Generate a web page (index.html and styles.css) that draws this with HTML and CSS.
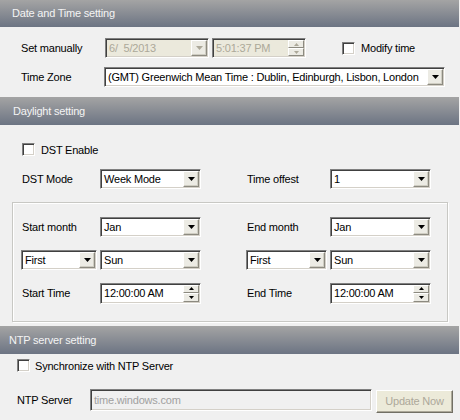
FILE: index.html
```html
<!DOCTYPE html>
<html>
<head>
<meta charset="utf-8">
<link rel="stylesheet" href="styles.css">
</head>
<body>
<div class="page">
  <div class="hdr">Date and Time setting</div>
  <div class="sec1">
    <div class="row">
      <span class="lbl l1">Set manually</span>
      <div class="field dis w-date">
        <span class="txt">6/&nbsp; 5/2013</span>
        <span class="drop"><svg width="7" height="4" viewBox="0 0 7 4"><polygon points="0,0 7,0 3.5,4" fill="#aca899"/></svg></span>
      </div>
      <div class="field dis w-time">
        <span class="txt">5:01:37 PM</span>
        <span class="spin">
          <span class="sb"><svg width="5" height="3" viewBox="0 0 5 3"><polygon points="2.5,0 5,3 0,3" fill="#aca899"/></svg></span>
          <span class="sb"><svg width="5" height="3" viewBox="0 0 5 3"><polygon points="0,0 5,0 2.5,3" fill="#aca899"/></svg></span>
        </span>
      </div>
      <label class="chk modify"><span class="box"></span><span>Modify time</span></label>
    </div>
    <div class="row">
      <span class="lbl l2">Time Zone</span>
      <div class="field w-tz">
        <span class="txt">(GMT) Greenwich Mean Time : Dublin, Edinburgh, Lisbon, London</span>
        <span class="drop"><svg width="7" height="4" viewBox="0 0 7 4"><polygon points="0,0 7,0 3.5,4" fill="#000"/></svg></span>
      </div>
    </div>
  </div>

  <div class="hdr h2">Daylight setting</div>
  <div class="sec2">
    <label class="chk dst"><span class="box"></span><span>DST Enable</span></label>
    <div class="cols mode">
      <div class="col">
        <span class="lbl lc">DST Mode</span>
        <div class="field w-cb"><span class="txt">Week Mode</span><span class="drop"><svg width="7" height="4" viewBox="0 0 7 4"><polygon points="0,0 7,0 3.5,4" fill="#000"/></svg></span></div>
      </div>
      <div class="col">
        <span class="lbl rc">Time offest</span>
        <div class="field w-cb"><span class="txt">1</span><span class="drop"><svg width="7" height="4" viewBox="0 0 7 4"><polygon points="0,0 7,0 3.5,4" fill="#000"/></svg></span></div>
      </div>
    </div>
    <div class="group">
      <div class="cols">
        <div class="col">
          <span class="lbl lc">Start month</span>
          <div class="field w-cb"><span class="txt">Jan</span><span class="drop"><svg width="7" height="4" viewBox="0 0 7 4"><polygon points="0,0 7,0 3.5,4" fill="#000"/></svg></span></div>
        </div>
        <div class="col">
          <span class="lbl rc">End month</span>
          <div class="field w-cb"><span class="txt">Jan</span><span class="drop"><svg width="7" height="4" viewBox="0 0 7 4"><polygon points="0,0 7,0 3.5,4" fill="#000"/></svg></span></div>
        </div>
      </div>
      <div class="cols">
        <div class="col">
          <div class="field w-first-l"><span class="txt">First</span><span class="drop"><svg width="7" height="4" viewBox="0 0 7 4"><polygon points="0,0 7,0 3.5,4" fill="#000"/></svg></span></div>
          <div class="field w-cb"><span class="txt">Sun</span><span class="drop"><svg width="7" height="4" viewBox="0 0 7 4"><polygon points="0,0 7,0 3.5,4" fill="#000"/></svg></span></div>
        </div>
        <div class="col">
          <div class="field w-first-r"><span class="txt">First</span><span class="drop"><svg width="7" height="4" viewBox="0 0 7 4"><polygon points="0,0 7,0 3.5,4" fill="#000"/></svg></span></div>
          <div class="field w-cb"><span class="txt">Sun</span><span class="drop"><svg width="7" height="4" viewBox="0 0 7 4"><polygon points="0,0 7,0 3.5,4" fill="#000"/></svg></span></div>
        </div>
      </div>
      <div class="cols">
        <div class="col">
          <span class="lbl lc">Start Time</span>
          <div class="field w-cb tall">
            <span class="txt">12:00:00 AM</span>
            <span class="spin">
              <span class="sb"><svg width="5" height="3" viewBox="0 0 5 3"><polygon points="2.5,0 5,3 0,3" fill="#000"/></svg></span>
              <span class="sb"><svg width="5" height="3" viewBox="0 0 5 3"><polygon points="0,0 5,0 2.5,3" fill="#000"/></svg></span>
            </span>
          </div>
        </div>
        <div class="col">
          <span class="lbl rc">End Time</span>
          <div class="field w-cb tall">
            <span class="txt">12:00:00 AM</span>
            <span class="spin">
              <span class="sb"><svg width="5" height="3" viewBox="0 0 5 3"><polygon points="2.5,0 5,3 0,3" fill="#000"/></svg></span>
              <span class="sb"><svg width="5" height="3" viewBox="0 0 5 3"><polygon points="0,0 5,0 2.5,3" fill="#000"/></svg></span>
            </span>
          </div>
        </div>
      </div>
    </div>
  </div>

  <div class="hdr h3">NTP server setting</div>
  <div class="sec3">
    <label class="chk sync"><span class="box"></span><span>Synchronize with NTP Server</span></label>
    <div class="row ntp">
      <span class="lbl l3">NTP Server</span>
      <div class="field dis2 w-ntp"><span class="txt">time.windows.com</span></div>
      <span class="btn">Update Now</span>
    </div>
  </div>
</div>
</body>
</html>
```

FILE: styles.css
```css
html, body {
  margin: 0;
  padding: 0;
  background: #f0f0f0;
}
.page {
  width: 460px;
  height: 420px;
  overflow: hidden;
  background: #f0f0f0;
  font-family: "Liberation Sans", Arial, sans-serif;
  font-size: 11px;
  letter-spacing: -0.2px;
  color: #000;
}
.hdr {
  height: 27px;
  line-height: 27px;
  padding-left: 12px;
  color: #f4f4f4;
  font-size: 11px;
  background: linear-gradient(#a4a4a4, #6c7483);
  width: 447px;
}
.h2 { height: 28px; line-height: 28px; padding-left: 13px; width: 446px; }
.h3 { height: 28px; line-height: 28px; padding-left: 9px; width: 450px; }

.sec1 {
  padding: 11px 0 10px 21px;
  display: flex;
  flex-direction: column;
  gap: 9px;
}
.row {
  display: flex;
  align-items: center;
  height: 20px;
}
.lbl { display: inline-block; white-space: nowrap; }
.l1 { width: 84px; }
.l2 { width: 83px; }
.l3 { width: 73px; }

.field {
  box-sizing: border-box;
  height: 20px;
  border: 1px solid;
  border-color: #808080 #ffffff #ffffff #808080;
  box-shadow: inset 1px 1px #404040, inset -1px -1px #d4d0c8;
  background: #fff;
  display: flex;
  align-items: center;
  flex: none;
  overflow: hidden;
}
.field .txt {
  padding-left: 3px;
  white-space: nowrap;
  flex: 1;
  overflow: hidden;
}
.dis { background: #ebe9dc; color: #aca899; }
.dis2 { background: #f0f0f0; color: #a0a0a0; }

.drop {
  box-sizing: border-box;
  width: 16px;
  height: 16px;
  margin: 1px;
  flex: none;
  background: #ecebe4;
  border: 1px solid;
  border-color: #ffffff #8c8a80 #8c8a80 #ffffff;
  box-shadow: inset -1px -1px #cfcdc2;
  display: flex;
  align-items: center;
  justify-content: center;
}
.spin {
  display: flex;
  flex-direction: column;
  width: 16px;
  margin: 1px;
  flex: none;
}
.sb {
  box-sizing: border-box;
  height: 8px;
  background: #ecebe4;
  border: 1px solid;
  border-color: #ffffff #8c8a80 #8c8a80 #ffffff;
  display: flex;
  align-items: center;
  justify-content: center;
}
.tall .sb { height: 8.5px; }

.w-date { width: 104px; }
.w-time { width: 94px; margin-left: 3px; }
.w-tz { width: 341px; }
.w-cb { width: 101px; }
.w-first-l { width: 76px; margin-right: 3px; }
.w-first-r { width: 81px; margin-right: 3px; }
.w-ntp { width: 282px; height: 22px; }
.tall { height: 21px; }

.chk {
  display: flex;
  align-items: center;
  gap: 6px;
  height: 13px;
}
.box {
  box-sizing: border-box;
  width: 13px;
  height: 13px;
  flex: none;
  background: #fff;
  border: 1px solid;
  border-color: #808080 #ffffff #ffffff #808080;
  box-shadow: inset 1px 1px #404040, inset -1px -1px #d4d0c8;
}
.modify { margin-left: 36px; }

.sec2 {
  padding-top: 18px;
}
.dst { margin-left: 22px; }
.cols {
  display: flex;
  height: 20px;
  align-items: center;
}
.col {
  display: flex;
  align-items: center;
}
.col:first-child { width: 225px; padding-left: 21px; }
.lc { width: 78px; padding-left: 1px; }
.rc { width: 83px; padding-left: 1px; }
.mode { margin-top: 13px; }

.group {
  box-sizing: border-box;
  margin: 13px 0 0 12px;
  width: 436px;
  height: 120px;
  border: 1px solid #c8c8c4;
  box-shadow: inset 1px 1px #fff, 1px 1px #fff;
  padding-top: 14px;
  display: flex;
  flex-direction: column;
  gap: 13px;
}
.group .col:first-child { width: 225px; padding-left: 8px; }

.h3 { margin-top: 4px; }

.sec3 {
  padding: 5px 0 0 17px;
}
.sync { gap: 5px; }
.ntp {
  margin-top: 16px;
  height: 24px;
}
.btn {
  box-sizing: border-box;
  width: 77px;
  height: 23px;
  margin-left: 4px;
  margin-top: 2px;
  background: #ecead9;
  border: 1px solid;
  border-color: #ffffff #716f64 #716f64 #ffffff;
  box-shadow: inset -1px -1px #aca899;
  color: #aca899;
  display: flex;
  align-items: center;
  justify-content: center;
}
```
